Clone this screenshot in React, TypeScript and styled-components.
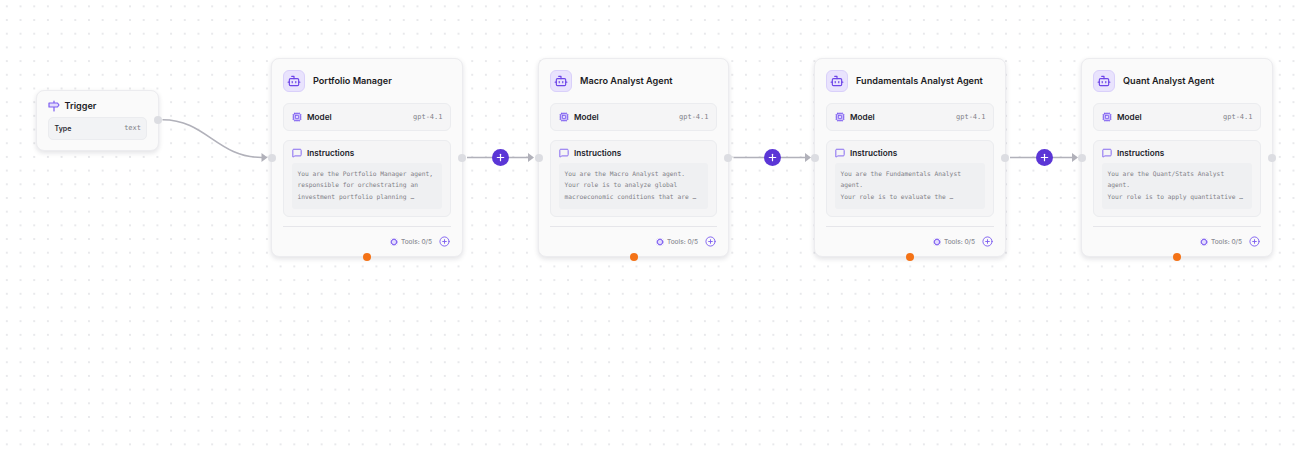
import * as React from "react";
import styled, { createGlobalStyle } from "styled-components";
import { Bot, CirclePlus, Cog, Cpu, MessageSquare, Plus } from "lucide-react";

const GlobalStyle = createGlobalStyle`
    html, body {
        margin: 0;
        padding: 0;
        background: #ffffff;
    }
`;

interface AgentData {
    name: string;
    left: number;
    width: number;
    prompt: string;
}

const agents: AgentData[] = [
    {
        name: "Portfolio Manager",
        left: 271,
        width: 192,
        prompt: "You are the Portfolio Manager agent,\nresponsible for orchestrating an\ninvestment portfolio planning …",
    },
    {
        name: "Macro Analyst Agent",
        left: 538,
        width: 191,
        prompt: "You are the Macro Analyst agent.\nYour role is to analyze global\nmacroeconomic conditions that are …",
    },
    {
        name: "Fundamentals Analyst Agent",
        left: 814,
        width: 192,
        prompt: "You are the Fundamentals Analyst\nagent.\nYour role is to evaluate the …",
    },
    {
        name: "Quant Analyst Agent",
        left: 1081,
        width: 192,
        prompt: "You are the Quant/Stats Analyst\nagent.\nYour role is to apply quantitative …",
    },
];

const plusButtons = [500.3, 772, 1044];

const SignIcon = () => (
    <svg width="12" height="12" viewBox="0 0 24 24" fill="#e3dcfd" stroke="#7c5cf0" strokeWidth="2.4" strokeLinejoin="round" strokeLinecap="round">
        <path d="M12 2v4M12 14v8" />
        <path d="M2 6h17l3 4-3 4H2z" />
    </svg>
);

export default function App() {
    return (
        <Canvas>
            <GlobalStyle />
            <EdgeLayer width="1296" height="450" viewBox="0 0 1296 450">
                <path d="M162.5 119.7 C 206 119.7, 217 157.5, 262 157.5" />
                <path d="M467 157.5 H 529" />
                <path d="M733.5 157.5 H 805" />
                <path d="M1010 157.5 H 1072" />
                <polygon points="261.5,153 267.5,157.5 261.5,162" />
                <polygon points="528,153 534,157.5 528,162" />
                <polygon points="805,153 811,157.5 805,162" />
                <polygon points="1072,153 1078,157.5 1072,162" />
            </EdgeLayer>

            <TriggerNode>
                <TriggerTitle>
                    <SignIcon />
                    Trigger
                </TriggerTitle>
                <TriggerField>
                    <FieldLabel>Type</FieldLabel>
                    <MonoValue>text</MonoValue>
                </TriggerField>
                <Handle $side="right" $top={29} />
            </TriggerNode>

            {agents.map((agent) => (
                <AgentNode key={agent.name} $left={agent.left} $width={agent.width}>
                    <Handle $side="left" $top={98.5} />
                    <Handle $side="right" $top={98.5} />
                    <BottomHandle />
                    <AgentHeader>
                        <IconTile>
                            <Bot size={14} color="#6d45e8" strokeWidth={2} />
                        </IconTile>
                        <AgentName>{agent.name}</AgentName>
                    </AgentHeader>
                    <ModelBox>
                        <BoxLabel>
                            <Cpu size={10} color="#7c5cf0" fill="#e3dcfd" strokeWidth={2.2} />
                            Model
                        </BoxLabel>
                        <MonoValue>gpt-4.1</MonoValue>
                    </ModelBox>
                    <InstructionsBox>
                        <BoxLabel>
                            <MessageSquare size={10} color="#7c5cf0" strokeWidth={2.2} />
                            Instructions
                        </BoxLabel>
                        <PromptText>{agent.prompt}</PromptText>
                    </InstructionsBox>
                    <Divider />
                    <AgentFooter>
                        <Cog size={8} color="#7c5cf0" fill="#e3dcfd" strokeWidth={2.6} />
                        <ToolsLabel>Tools: 0/5</ToolsLabel>
                        <CirclePlus size={11} color="#7c5cf0" strokeWidth={2} />
                    </AgentFooter>
                </AgentNode>
            ))}

            {plusButtons.map((x) => (
                <AddButton key={x} $x={x}>
                    <Plus size={11} color="#ffffff" strokeWidth={2.6} />
                </AddButton>
            ))}
        </Canvas>
    );
}

const Canvas = styled.div`
    position: relative;
    width: 1296px;
    height: 450px;
    overflow: hidden;
    background-color: #ffffff;
    background-image: radial-gradient(circle, #d6d7dc 0.6px, transparent 0.8px);
    background-size: 13.7px 13.7px;
    background-position: 0 -0.5px;
    font-family: "Inter", "Liberation Sans", sans-serif;
`;

const EdgeLayer = styled.svg`
    position: absolute;
    inset: 0;

    path {
        fill: none;
        stroke: #b1b1ba;
        stroke-width: 1.6;
    }

    polygon {
        fill: #b1b1ba;
    }
`;

const TriggerNode = styled.div`
    position: absolute;
    left: 36px;
    top: 89.5px;
    width: 122.5px;
    height: 61px;
    box-sizing: border-box;
    padding: 9px 10.5px;
    display: flex;
    flex-direction: column;
    gap: 5px;
    background: #fafafa;
    border: 1px solid #ececef;
    border-radius: 8px;
    box-shadow: 0 2px 5px rgba(20, 20, 40, 0.12);
`;

const TriggerTitle = styled.div`
    display: flex;
    align-items: center;
    gap: 5px;
    font-size: 9.1px;
    font-weight: 600;
    color: #1c1c24;
    height: 12px;
`;

const TriggerField = styled.div`
    display: flex;
    align-items: center;
    justify-content: space-between;
    height: 23px;
    box-sizing: border-box;
    padding: 0 5px 0 6px;
    background: #f2f3f5;
    border: 1px solid #ebecef;
    border-radius: 5px;
`;

const FieldLabel = styled.span`
    font-size: 7px;
    font-weight: 600;
    color: #2a2a33;
`;

const MonoValue = styled.span`
    font-family: "DejaVu Sans Mono", "Liberation Mono", monospace;
    font-size: 7px;
    color: #7f7f87;
`;

const Handle = styled.div<{ $side: "left" | "right"; $top: number }>`
    position: absolute;
    top: ${(p) => p.$top - 4}px;
    ${(p) => p.$side}: -4px;
    width: 8px;
    height: 8px;
    border-radius: 50%;
    background: #dcdde2;
`;

const BottomHandle = styled.div`
    position: absolute;
    left: 91px;
    bottom: -4.5px;
    width: 8px;
    height: 8px;
    border-radius: 50%;
    background: #f47216;
`;

const AgentNode = styled.div<{ $left: number; $width: number }>`
    position: absolute;
    left: ${(p) => p.$left}px;
    top: 58px;
    width: ${(p) => p.$width}px;
    height: 199px;
    box-sizing: border-box;
    padding: 11px 11px 0;
    display: flex;
    flex-direction: column;
    background: #fafafa;
    border: 1px solid #ececef;
    border-radius: 8px;
    box-shadow: 0 2px 5px rgba(20, 20, 40, 0.12);
`;

const AgentHeader = styled.div`
    display: flex;
    align-items: center;
    gap: 8px;
    height: 22px;
    margin-bottom: 11px;
`;

const IconTile = styled.div`
    width: 22px;
    height: 22px;
    display: flex;
    align-items: center;
    justify-content: center;
    background: #e9e3fd;
    border: 1px solid #d9d0fa;
    border-radius: 6px;
    box-sizing: border-box;
`;

const AgentName = styled.span`
    font-size: 9.15px;
    font-weight: 600;
    color: #1c1c24;
    white-space: nowrap;
    padding-bottom: 2px;
`;

const ModelBox = styled.div`
    display: flex;
    align-items: center;
    justify-content: space-between;
    height: 28px;
    box-sizing: border-box;
    padding: 0 7.5px 0 8px;
    background: #f5f5f6;
    border: 1px solid #ebecef;
    border-radius: 6px;
    margin-bottom: 9px;
`;

const BoxLabel = styled.div`
    display: flex;
    align-items: center;
    gap: 5px;
    font-size: 8.2px;
    font-weight: 600;
    color: #22222a;
`;

const InstructionsBox = styled.div`
    height: 77px;
    box-sizing: border-box;
    padding: 7px 8px;
    display: flex;
    flex-direction: column;
    justify-content: space-between;
    background: #f5f5f6;
    border: 1px solid #ebecef;
    border-radius: 6px;
`;

const PromptText = styled.div`
    height: 46px;
    box-sizing: border-box;
    padding: 5px 5.5px;
    background: #eff0f2;
    border-radius: 3px;
    font-family: "DejaVu Sans Mono", "Liberation Mono", monospace;
    font-size: 6.25px;
    line-height: 11.3px;
    color: #7f7f87;
    white-space: pre;
    overflow: hidden;
`;

const Divider = styled.div`
    height: 1px;
    background: #e6e6ea;
    margin-top: 9px;
`;

const AgentFooter = styled.div`
    display: flex;
    align-items: center;
    justify-content: flex-end;
    gap: 3px;
    margin-top: 9px;
    padding-right: 1px;
    height: 11px;
`;

const ToolsLabel = styled.span`
    font-size: 6.5px;
    font-weight: 500;
    color: #8b8b93;
    margin-right: 4px;
`;

const AddButton = styled.div<{ $x: number }>`
    position: absolute;
    left: ${(p) => p.$x - 8.5}px;
    top: 148.5px;
    width: 17px;
    height: 17px;
    border-radius: 50%;
    background: #5b36d6;
    display: flex;
    align-items: center;
    justify-content: center;
`;
